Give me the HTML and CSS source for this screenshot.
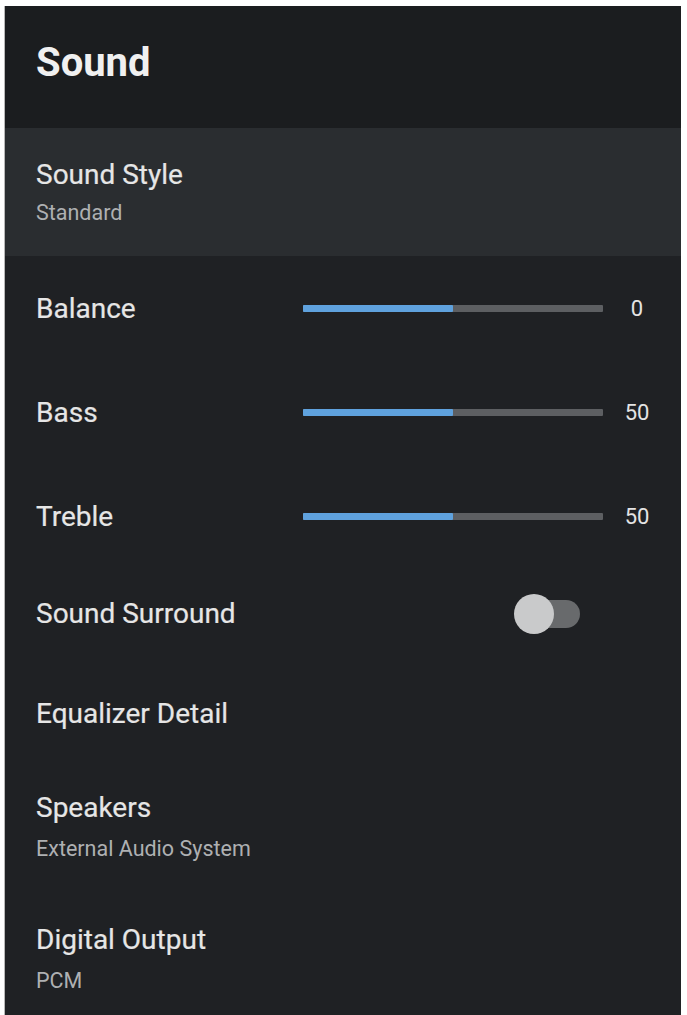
FILE: index.html
```html
<!DOCTYPE html>
<html>
<head>
<meta charset="utf-8">
<link rel="stylesheet" href="styles.css">
</head>
<body>
<div class="panel">
  <header class="header"><h1 class="title">Sound</h1></header>
  <div class="row two-line selected">
    <div class="label">Sound Style</div>
    <div class="sub">Standard</div>
  </div>
  <div class="row slider-row">
    <div class="label">Balance</div>
    <div class="track"><div class="fill" style="width:50%"></div></div>
    <div class="value">0</div>
  </div>
  <div class="row slider-row">
    <div class="label">Bass</div>
    <div class="track"><div class="fill" style="width:50%"></div></div>
    <div class="value">50</div>
  </div>
  <div class="row slider-row">
    <div class="label">Treble</div>
    <div class="track"><div class="fill" style="width:50%"></div></div>
    <div class="value">50</div>
  </div>
  <div class="row slider-row surround">
    <div class="label">Sound Surround</div>
    <div class="toggle"><div class="toggle-track"></div><div class="toggle-thumb"></div></div>
  </div>
  <div class="row single">
    <div class="label">Equalizer Detail</div>
  </div>
  <div class="row two-line">
    <div class="label">Speakers</div>
    <div class="sub">External Audio System</div>
  </div>
  <div class="row two-line last">
    <div class="label">Digital Output</div>
    <div class="sub">PCM</div>
  </div>
</div>
</body>
</html>
```

FILE: styles.css
```css
html, body {
  margin: 0;
  padding: 0;
  background: #ffffff;
  height: 100%;
}
body {
  font-family: Roboto, "Liberation Sans", sans-serif;
  overflow: hidden;
}
.panel {
  margin: 6px 6px 0 5px;
  height: 1009px;
  background: #1f2124;
  box-shadow: -1px 0 0 #b8b8b8;
  display: flex;
  flex-direction: column;
}
.header {
  height: 122px;
  background: #1b1d1f;
  display: flex;
  align-items: center;
  padding-left: 31px;
  box-sizing: border-box;
}
.title {
  margin: 0 0 8px 0;
  font-size: 40px;
  font-weight: 700;
  color: #f0f0f0;
  line-height: 48px;
}
.row {
  padding-left: 31px;
  box-sizing: border-box;
}
.label {
  font-size: 28px;
  color: #e6e6e6;
  line-height: 32px;
  -webkit-text-stroke: 0.2px #e6e6e6;
}
.sub {
  font-size: 21.5px;
  color: #aeb0b2;
  line-height: 26px;
  margin-top: 12px;
}
.two-line {
  height: 132px;
  display: flex;
  flex-direction: column;
  justify-content: flex-start;
  padding-top: 28px;
}
.selected {
  height: 128px;
  background: #2a2d30;
  padding-top: 31px;
}
.selected .sub {
  margin-top: 9px;
}
.slider-row {
  height: 104px;
  display: grid;
  grid-template-columns: 267px 300px 56px;
  align-items: center;
}
.slider-row .label {
  margin-top: 2px;
}
.surround {
  height: 96px;
}
.surround .label {
  margin-top: 0;
  margin-bottom: 4px;
}
.single {
  height: 100px;
  display: flex;
  align-items: center;
}
.last {
  flex: 1;
}
.track {
  height: 7px;
  background: #5d5f62;
  border-radius: 1px;
}
.fill {
  height: 100%;
  background: #5fa2de;
  border-radius: 1px;
}
.value {
  font-size: 22px;
  color: #e4e4e4;
  text-align: center;
  margin-left: 12px;
  width: 44px;
}
.toggle {
  justify-self: end;
  margin-right: 23px;
  width: 66px;
  height: 40px;
  position: relative;
  margin-top: -4px;
}
.toggle-track {
  position: absolute;
  right: 0;
  top: 6px;
  width: 46px;
  height: 28px;
  border-radius: 14px;
  background: #686a6c;
}
.toggle-thumb {
  position: absolute;
  left: 0;
  top: 0;
  width: 40px;
  height: 40px;
  border-radius: 50%;
  background: #c9cacb;
}
```
